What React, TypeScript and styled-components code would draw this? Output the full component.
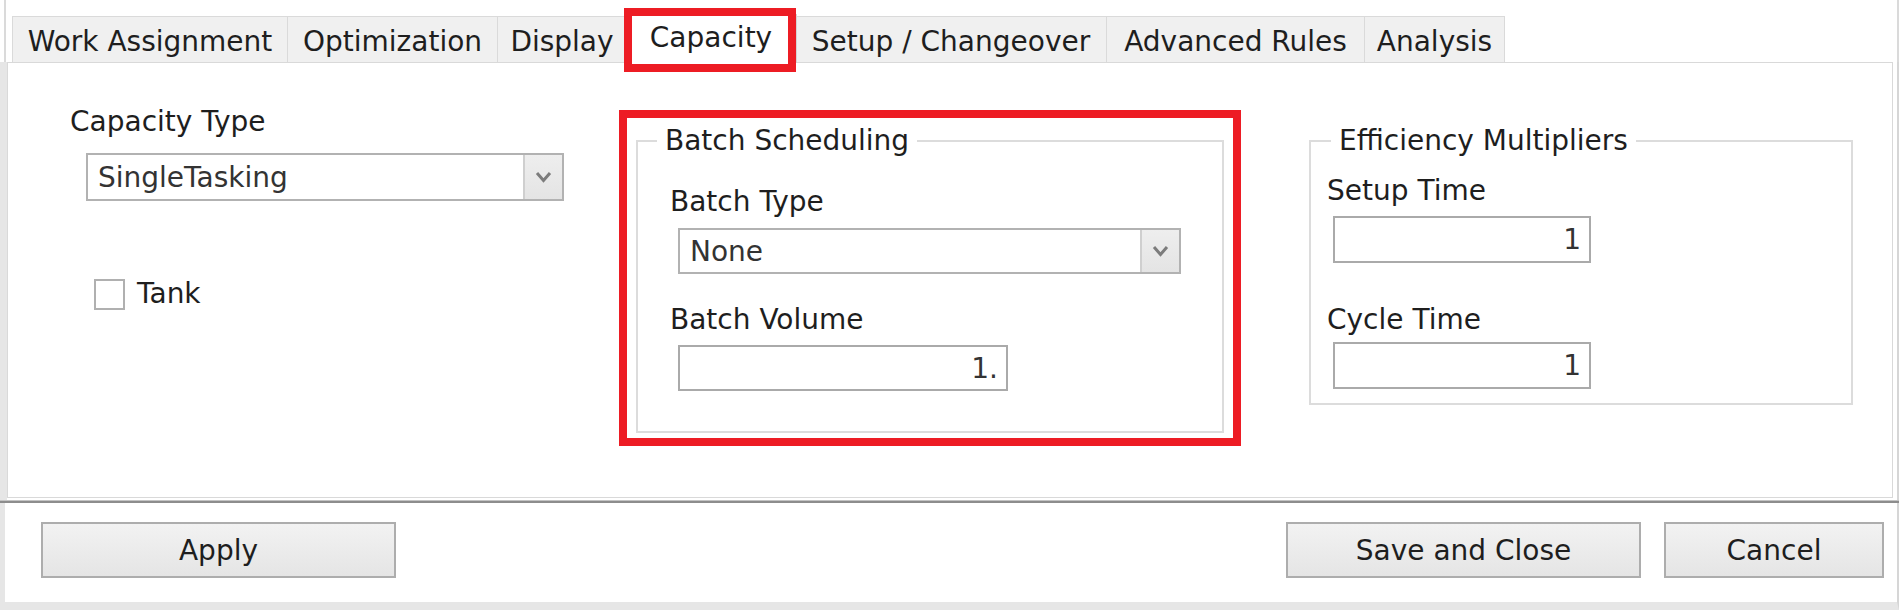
import React from "react";
import styled, { createGlobalStyle } from "styled-components";

const GlobalStyle = createGlobalStyle`
  html, body { margin: 0; padding: 0; background: #ffffff; }
  body { font-family: "DejaVu Sans", Verdana, sans-serif; }
  * { box-sizing: border-box; }
`;

const Page = styled.div`
  width: 1899px;
  height: 610px;
  display: flex;
  flex-direction: column;
  background: #ffffff;
  font-family: "DejaVu Sans", Verdana, sans-serif;
  font-size: 28px;
  color: #1e1e1e;
  overflow: hidden;
`;

const TabStrip = styled.div`
  height: 62px;
  margin-left: 4px;
  padding-left: 6px;
  border-left: 2px solid #dadada;
  border-right: 2px solid #dadada;
  display: flex;
  align-items: flex-end;
  flex-shrink: 0;
`;

const Tab = styled.div<{ $active?: boolean; $width: number }>`
  position: relative;
  flex-shrink: 0;
  width: ${(p) => p.$width}px;
  text-align: center;
  white-space: nowrap;
  border: 1px solid ${(p) => (p.$active ? "#d4d4d4" : "#dadada")};
  border-bottom: none;
  margin-left: ${(p) => (p.$active ? "-2px" : "-1px")};
  margin-right: ${(p) => (p.$active ? "-1px" : "0")};
  background: ${(p) => (p.$active ? "#ffffff" : "#f0f0f0")};
  height: ${(p) => (p.$active ? "49px" : "46px")};
  margin-bottom: ${(p) => (p.$active ? "-1px" : "0")};
  z-index: ${(p) => (p.$active ? 2 : 1)};
  padding-top: ${(p) => (p.$active ? "2px" : "5px")};
  line-height: ${(p) => (p.$active ? "41px" : "40px")};
  &:first-child { margin-left: 0; }
`;

const TabHighlight = styled.span`
  position: absolute;
  left: -2px;
  right: 0;
  top: -7px;
  bottom: -9px;
  border: 8px solid #ed1c24;
  pointer-events: none;
`;

const PanelArea = styled.div`
  flex-shrink: 0;
  border-left: 7px solid #e6e6e6;
  border-right: 2px solid #d6d6d6;
  padding-right: 4px;
  padding-bottom: 2px;
`;

const Panel = styled.div`
  height: 436px;
  border: 1px solid #d9d9d9;
  background: #ffffff;
  display: grid;
  grid-template-columns: 611px 622px 1fr;
  align-items: start;
`;

const Separator = styled.div`
  height: 3px;
  flex-shrink: 0;
  background: #8d8d8d;
  border-top: 1px solid #c4c4c4;
`;

const LeftColumn = styled.div`
  padding: 42px 0 0 62px;
  display: flex;
  flex-direction: column;
  align-items: flex-start;
`;

const Label = styled.div<{ $gap?: number }>`
  line-height: 34px;
  height: 34px;
  white-space: nowrap;
  margin-top: ${(p) => p.$gap ?? 0}px;
  color: #1e1e1e;
`;

const SelectBox = styled.div<{ $width: number; $height: number; $gap: number; $indent: number }>`
  width: ${(p) => p.$width}px;
  height: ${(p) => p.$height}px;
  margin-top: ${(p) => p.$gap}px;
  margin-left: ${(p) => p.$indent}px;
  border: 2px solid #b2b2b2;
  background: #ffffff;
  display: flex;
  align-items: stretch;
`;

const SelectValue = styled.div`
  flex: 1;
  padding-left: 10px;
  display: flex;
  align-items: center;
  color: #333333;
  white-space: nowrap;
`;

const SelectArrow = styled.div`
  width: 39px;
  border-left: 2px solid #cfcfcf;
  background: linear-gradient(#eeeeee, #e4e4e4);
  display: flex;
  align-items: center;
  justify-content: center;
`;

const NumberBox = styled.div<{ $width: number; $height: number; $gap: number; $indent: number }>`
  width: ${(p) => p.$width}px;
  height: ${(p) => p.$height}px;
  margin-top: ${(p) => p.$gap}px;
  margin-left: ${(p) => p.$indent}px;
  border: 2px solid #aaaaaa;
  background: #ffffff;
  display: flex;
  align-items: center;
  justify-content: flex-end;
  padding-right: 8px;
  color: #333333;
`;

const CheckRow = styled.label`
  display: flex;
  align-items: center;
  gap: 12px;
  margin-top: 76px;
  margin-left: 24px;
  line-height: 34px;
`;

const CheckBox = styled.span`
  width: 31px;
  height: 31px;
  border: 2px solid #b0b0b0;
  background: #ffffff;
  display: inline-block;
`;

const BatchFrame = styled.div`
  margin-top: 47px;
  width: 622px;
  border: 8px solid #ed1c24;
  padding: 6px 9px 5px 9px;
`;

const GroupBox = styled.fieldset<{ $width?: number }>`
  margin: 0;
  padding: 0;
  border: 2px solid #dcdcdc;
  width: ${(p) => (p.$width ? `${p.$width}px` : "100%")};
  min-width: 0;
`;

const GroupLegend = styled.legend<{ $offset: number }>`
  margin-left: ${(p) => p.$offset}px;
  padding: 0 8px;
  line-height: 34px;
  white-space: nowrap;
`;

const GroupBody = styled.div<{ $left: number; $bottom: number }>`
  padding: 0 0 ${(p) => p.$bottom}px ${(p) => p.$left}px;
  display: flex;
  flex-direction: column;
  align-items: flex-start;
`;

const RightColumn = styled.div`
  padding: 61px 0 0 68px;
`;

const Footer = styled.div`
  flex: 1;
  border-left: 5px solid #e6e6e6;
  border-right: 2px solid #d6d6d6;
  border-bottom: 8px solid #e6e6e6;
  padding: 19px 13px 0 36px;
  display: flex;
  align-items: flex-start;
`;

const Button = styled.button<{ $width: number }>`
  width: ${(p) => p.$width}px;
  height: 56px;
  border: 2px solid #adadad;
  background: linear-gradient(#f2f2f2, #e5e5e5);
  font-family: "DejaVu Sans", Verdana, sans-serif;
  font-size: 28px;
  color: #1e1e1e;
  padding: 0;
  cursor: default;
`;

const Spacer = styled.div`
  flex: 1;
`;

const ButtonGroup = styled.div`
  display: flex;
  gap: 23px;
`;

const Chevron = () => (
  <svg width="17" height="12" viewBox="0 0 17 12">
    <polyline points="2,2 8.5,9.5 15,2" fill="none" stroke="#7c7c7c" strokeWidth="3" />
  </svg>
);

const tabs = [
  { label: "Work Assignment", width: 276 },
  { label: "Optimization", width: 211 },
  { label: "Display", width: 130 },
  { label: "Capacity", width: 172 },
  { label: "Setup / Changeover", width: 312 },
  { label: "Advanced Rules", width: 259 },
  { label: "Analysis", width: 141 },
];

export default function App() {
  return (
    <>
      <GlobalStyle />
      <Page>
        <TabStrip>
          {tabs.map((t) => (
            <Tab key={t.label} $width={t.width} $active={t.label === "Capacity"}>
              {t.label}
              {t.label === "Capacity" && <TabHighlight />}
            </Tab>
          ))}
        </TabStrip>
        <PanelArea>
          <Panel>
            <LeftColumn>
              <Label>Capacity Type</Label>
              <SelectBox $width={478} $height={48} $gap={14} $indent={16}>
                <SelectValue>SingleTasking</SelectValue>
                <SelectArrow>
                  <Chevron />
                </SelectArrow>
              </SelectBox>
              <CheckRow>
                <CheckBox />
                Tank
              </CheckRow>
            </LeftColumn>
            <BatchFrame>
              <GroupBox>
                <GroupLegend $offset={19}>Batch Scheduling</GroupLegend>
                <GroupBody $left={32} $bottom={40}>
                  <Label $gap={27}>Batch Type</Label>
                  <SelectBox $width={503} $height={46} $gap={9} $indent={8}>
                    <SelectValue>None</SelectValue>
                    <SelectArrow>
                      <Chevron />
                    </SelectArrow>
                  </SelectBox>
                  <Label $gap={29}>Batch Volume</Label>
                  <NumberBox $width={330} $height={46} $gap={8} $indent={8}>1.</NumberBox>
                </GroupBody>
              </GroupBox>
            </BatchFrame>
            <RightColumn>
              <GroupBox $width={544}>
                <GroupLegend $offset={20}>Efficiency Multipliers</GroupLegend>
                <GroupBody $left={16} $bottom={14}>
                  <Label $gap={16}>Setup Time</Label>
                  <NumberBox $width={258} $height={47} $gap={8} $indent={6}>1</NumberBox>
                  <Label $gap={40}>Cycle Time</Label>
                  <NumberBox $width={258} $height={47} $gap={5} $indent={6}>1</NumberBox>
                </GroupBody>
              </GroupBox>
            </RightColumn>
          </Panel>
        </PanelArea>
        <Separator />
        <Footer>
          <Button $width={355}>Apply</Button>
          <Spacer />
          <ButtonGroup>
            <Button $width={355}>Save and Close</Button>
            <Button $width={220}>Cancel</Button>
          </ButtonGroup>
        </Footer>
      </Page>
    </>
  );
}
